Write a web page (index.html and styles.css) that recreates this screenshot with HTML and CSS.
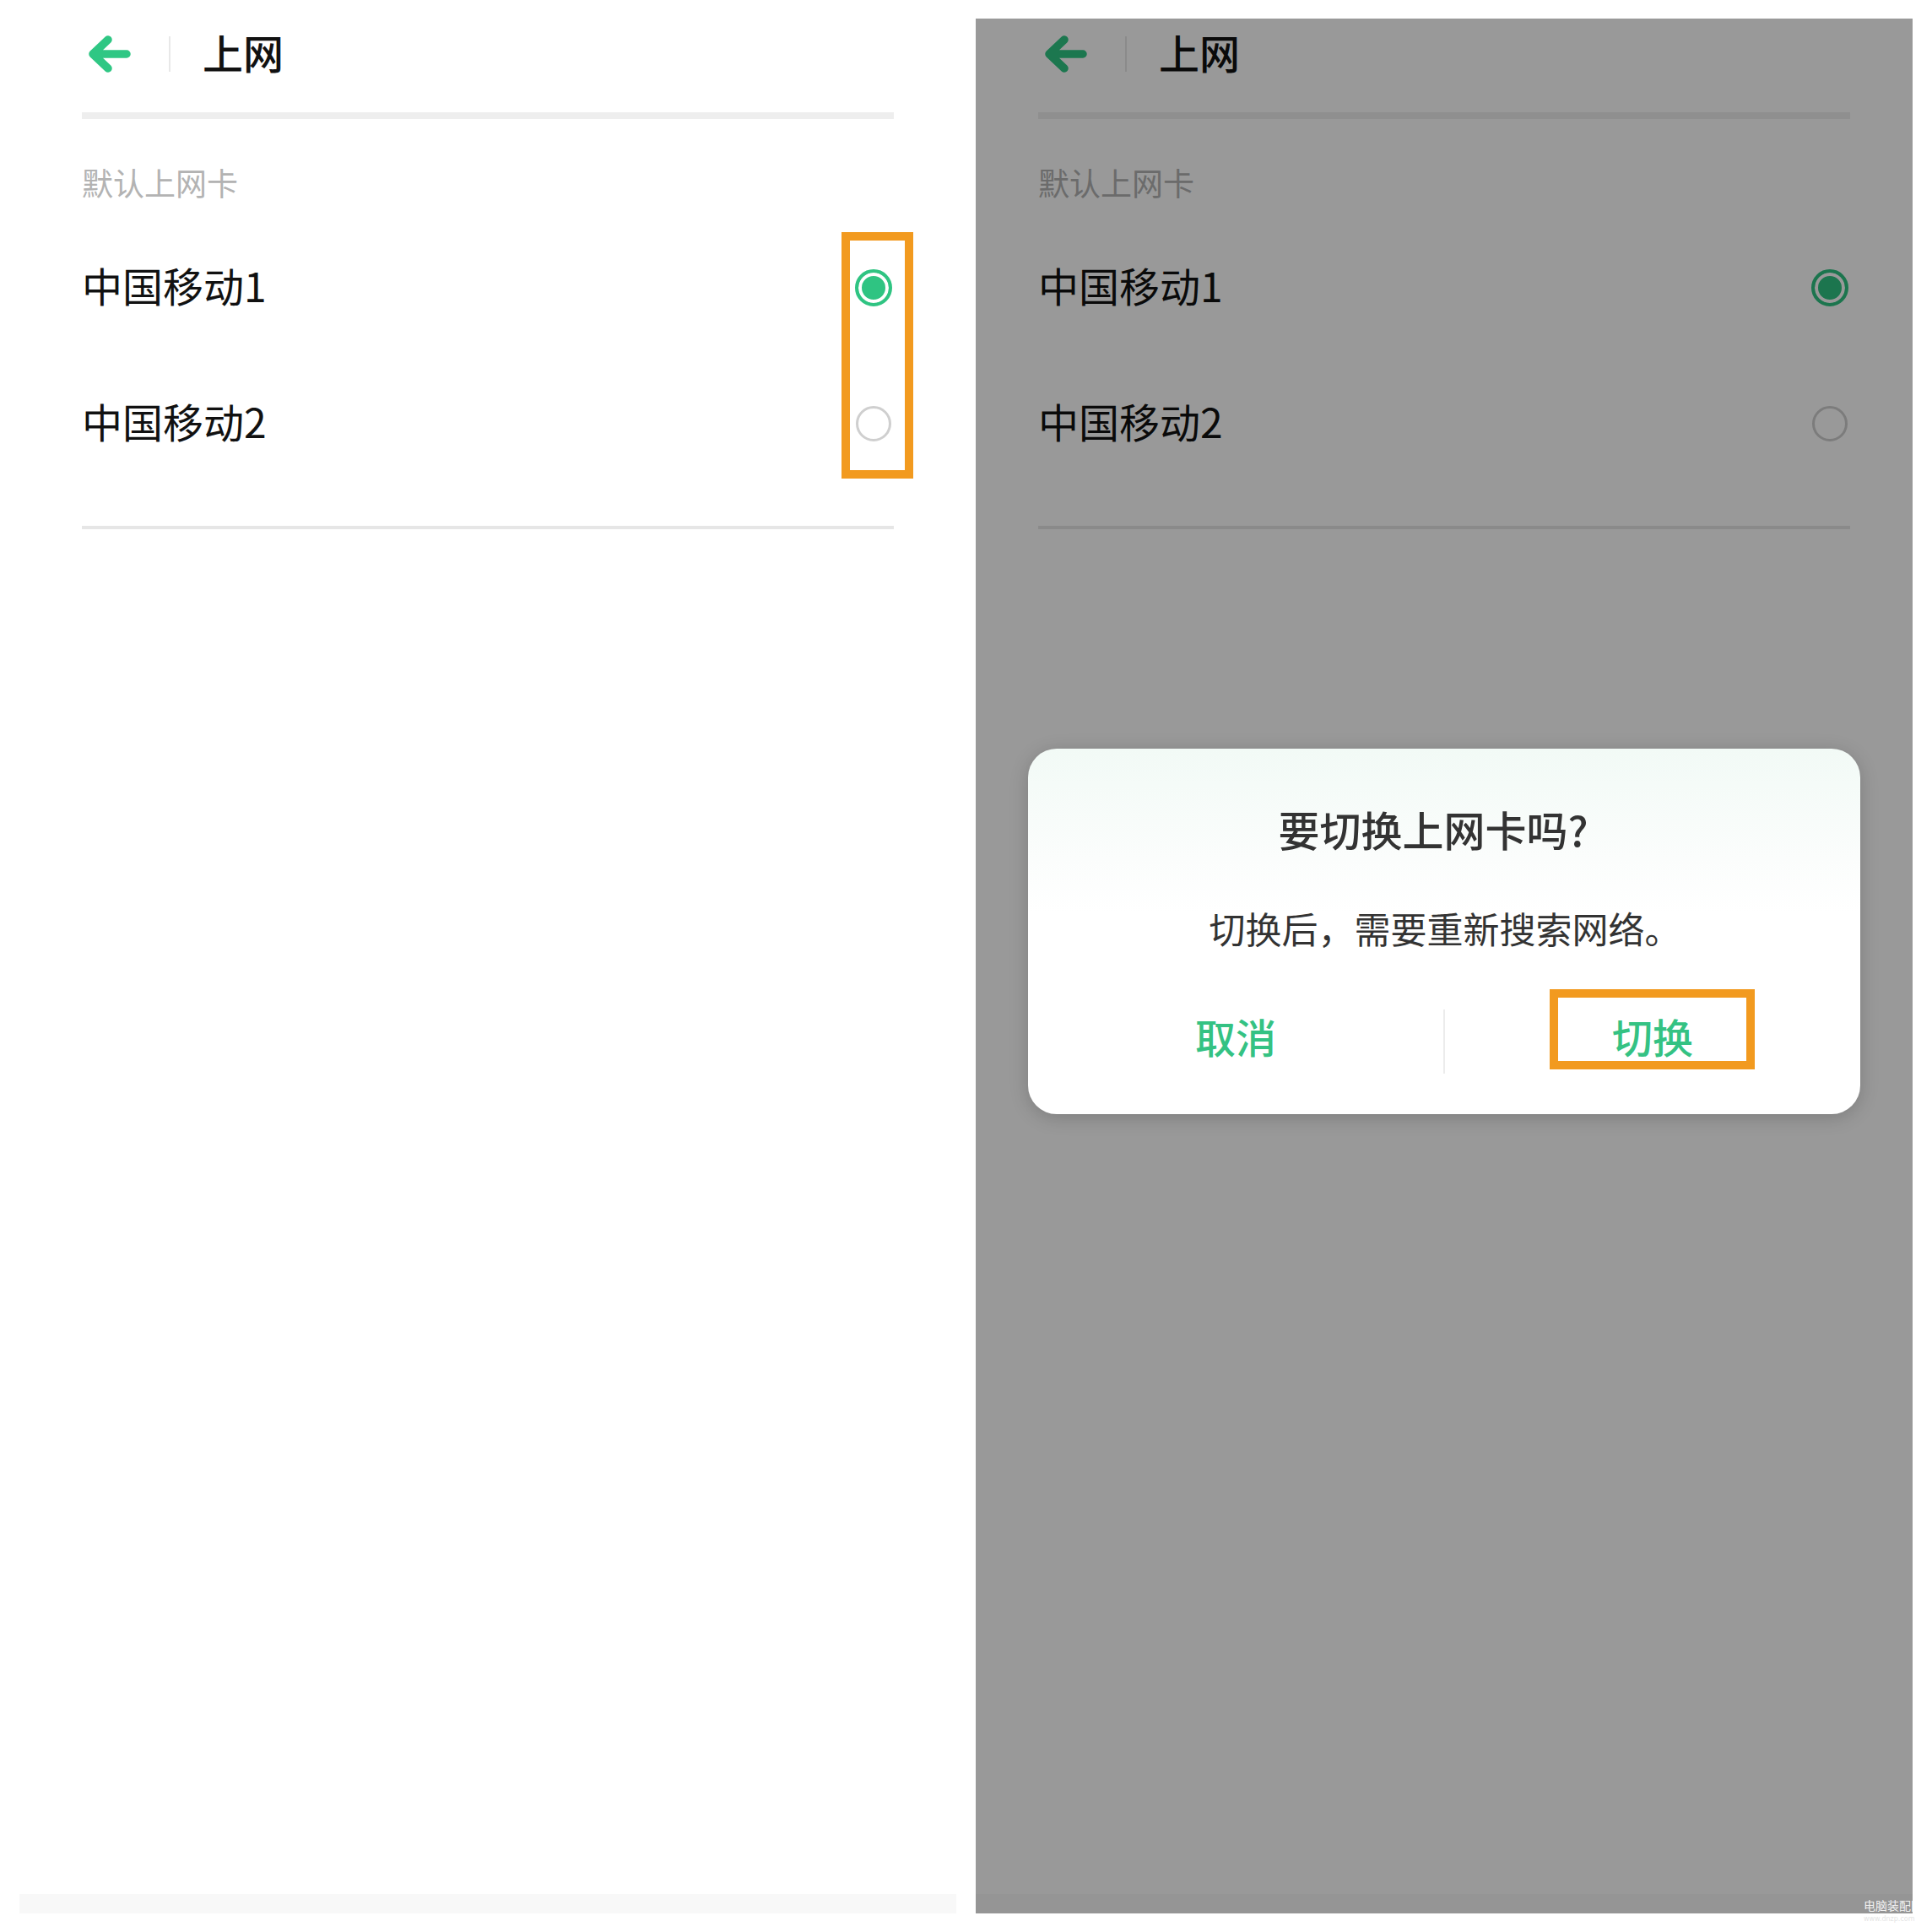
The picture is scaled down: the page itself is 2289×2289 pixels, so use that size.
FILE: index.html
```html
<!DOCTYPE html>
<html lang="zh-CN">
<head>
<meta charset="utf-8">
<title>上网</title>
<link rel="stylesheet" href="styles.css">
</head>
<body>
<div class="page">
  <section class="screen">
    <header class="bar">
      <svg class="back" width="52" height="44" viewBox="0 0 52 44"><path d="M47 22 H7 M25 5 L7 22 L25 39" fill="none" stroke="#2fc784" stroke-width="9.5" stroke-linecap="round" stroke-linejoin="round"/></svg>
      <span class="bar-div"></span>
      <h1 class="bar-title">上网</h1>
    </header>
    <div class="rule thick"></div>
    <div class="label">默认上网卡</div>
    <div class="list">
      <div class="row"><span class="row-text">中国移动1</span><span class="radio on"></span></div>
      <div class="row"><span class="row-text">中国移动2</span><span class="radio"></span></div>
    </div>
    <div class="rule thin"></div>
    <div class="navbar"></div>
    <div class="mark-box"></div>
  </section>

  <section class="screen">
    <header class="bar">
      <svg class="back" width="52" height="44" viewBox="0 0 52 44"><path d="M47 22 H7 M25 5 L7 22 L25 39" fill="none" stroke="#2fc784" stroke-width="9.5" stroke-linecap="round" stroke-linejoin="round"/></svg>
      <span class="bar-div"></span>
      <h1 class="bar-title">上网</h1>
    </header>
    <div class="rule thick"></div>
    <div class="label">默认上网卡</div>
    <div class="list">
      <div class="row"><span class="row-text">中国移动1</span><span class="radio on"></span></div>
      <div class="row"><span class="row-text">中国移动2</span><span class="radio"></span></div>
    </div>
    <div class="rule thin"></div>
    <div class="navbar"></div>
    <div class="scrim"></div>
    <div class="dialog">
      <div class="d-title">要切换上网卡吗?</div>
      <div class="d-text">切换后，需要重新搜索网络。</div>
      <div class="d-actions">
        <div class="d-btn">取消</div>
        <span class="d-sep"></span>
        <div class="d-btn">切换<span class="hl"></span></div>
      </div>
    </div>
  </section>

  <div class="watermark">
    <div class="wm-name">电脑装配网</div>
    <div class="wm-url">www.dnzp.com</div>
  </div>
</div>
</body>
</html>
```

FILE: styles.css
```css
html, body {
  margin: 0;
  padding: 0;
  background: #ffffff;
}

body {
  width: 2289px;
  height: 2289px;
  font-family: "Noto Sans CJK SC", "Noto Sans", sans-serif;
  color: #111111;
}

.page {
  position: relative;
  display: flex;
  gap: 23px;
  padding: 22px 0 0 23px;
}

.screen {
  position: relative;
  display: flex;
  flex-direction: column;
  width: 1110px;
  height: 2245px;
  background: #ffffff;
  overflow: hidden;
}

.bar {
  display: flex;
  align-items: center;
  height: 84px;
  padding-left: 80px;
}

.back {
  display: block;
  flex: none;
}

.bar-div {
  width: 2px;
  height: 42px;
  margin-left: 45px;
  background: #e8e8e8;
}

.bar-title {
  margin: 0 0 6px 38px;
  font-size: 48px;
  line-height: 60px;
  font-weight: 500;
  color: #111111;
}

.rule {
  margin-left: 74px;
  margin-right: 74px;
}

.rule.thick {
  margin-top: 27px;
  height: 8px;
  background: #eeeeee;
}

.rule.thin {
  margin-top: 41px;
  height: 4px;
  background: #e6e6e6;
}

.label {
  margin-top: 50px;
  padding-left: 74px;
  font-size: 37px;
  line-height: 50px;
  color: #b3b3b3;
}

.list {
  margin-top: 19px;
}

.row {
  display: flex;
  align-items: center;
  justify-content: space-between;
  height: 161px;
  padding: 0 76px 0 74px;
}

.row-text {
  font-size: 48px;
  line-height: 60px;
  margin-bottom: 8px;
  color: #111111;
}

.radio {
  box-sizing: border-box;
  width: 42px;
  height: 42px;
  border: 3px solid #cfcfcf;
  border-radius: 50%;
  margin-right: 1px;
}

.radio.on {
  width: 44px;
  height: 44px;
  margin-right: 0;
  border: 4px solid #2fc482;
  background: #2fc482;
  box-shadow: inset 0 0 0 4px #ffffff;
}

.navbar {
  margin-top: auto;
  height: 23px;
  background: #f8f8f8;
}

.mark-box {
  position: absolute;
  left: 974px;
  top: 253px;
  box-sizing: border-box;
  width: 85px;
  height: 292px;
  border: 10px solid #f29a1f;
}

.scrim {
  position: absolute;
  inset: 0;
  background: rgba(0, 0, 0, 0.4);
}

.dialog {
  position: absolute;
  left: 62px;
  top: 865px;
  width: 986px;
  height: 433px;
  display: flex;
  flex-direction: column;
  border-radius: 34px;
  background: linear-gradient(180deg, #f2faf6 0%, #fbfdfc 30%, #ffffff 45%);
  box-shadow: 0 4px 22px rgba(0, 0, 0, 0.18);
}

.d-title {
  margin-top: 65px;
  padding-right: 26px;
  text-align: center;
  font-size: 49px;
  line-height: 60px;
  font-weight: 500;
  color: #333333;
}

.d-text {
  margin-top: 59px;
  padding-left: 2px;
  text-align: center;
  font-size: 43px;
  line-height: 56px;
  color: #333333;
}

.d-actions {
  display: flex;
  margin-top: 45px;
  height: 96px;
}

.d-btn {
  position: relative;
  flex: 1;
  display: flex;
  align-items: center;
  justify-content: center;
  padding-top: 14px;
  font-size: 48px;
  line-height: 60px;
  font-weight: 500;
  color: #34c283;
}

.d-sep {
  align-self: flex-start;
  width: 2px;
  height: 76px;
  margin-top: 24px;
  background: #ececec;
}

.hl {
  position: absolute;
  top: 0;
  left: 50%;
  margin-left: -122px;
  box-sizing: border-box;
  width: 243px;
  height: 95px;
  border: 10px solid #f29a1f;
}

.watermark {
  position: absolute;
  left: 2208px;
  top: 2250px;
  line-height: 1;
}

.wm-name {
  font-size: 14px;
  color: rgba(255, 255, 255, 0.9);
}

.wm-url {
  margin-top: 6px;
  font-family: "DejaVu Sans", sans-serif;
  font-size: 8px;
  color: #e4e4e4;
}
```
